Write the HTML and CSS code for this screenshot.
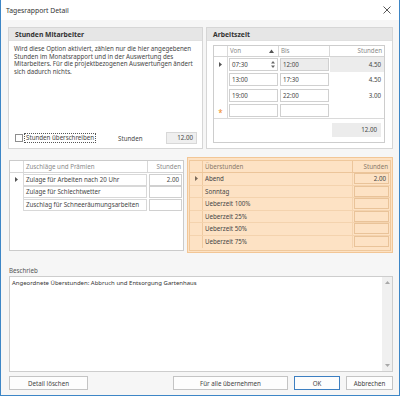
FILE: index.html
```html
<!DOCTYPE html>
<html lang="de">
<head>
<meta charset="utf-8">
<title>Tagesrapport Detail</title>
<link rel="stylesheet" href="styles.css">
</head>
<body>
<div class="window">
  <div class="titlebar">
    <span class="title">Tagesrapport Detail</span>
    <svg class="close" width="8" height="8" viewBox="0 0 8 8"><path d="M0.5 0.5L7.5 7.5M7.5 0.5L0.5 7.5" stroke="#444" stroke-width="0.9" fill="none"/></svg>
  </div>
  <div class="content">
    <div class="toprow">
      <section class="group gleft">
        <div class="ghead">Stunden Mitarbeiter</div>
        <div class="gbody">
          <p class="info">Wird diese Option aktiviert, zählen nur die hier angegebenen<br>Stunden im Monatsrapport und in der Auswertung des<br>Mitarbeiters. Für die projektbezogenen Auswertungen ändert<br>sich dadurch nichts.</p>
          <div class="override">
            <span class="check"></span>
            <span class="focuslabel">Stunden überschreiben</span>
            <span class="lbl">Stunden</span>
            <span class="field">12.00</span>
          </div>
        </div>
      </section>
      <section class="group gright">
        <div class="ghead">Arbeitszeit</div>
        <div class="gbody padded">
          <div class="tgrid">
            <div class="trow thead">
              <div class="ind"></div>
              <div class="hc">Von<svg class="sort" width="5" height="4" viewBox="0 0 5 4"><path d="M0 4L2.5 0.5L5 4Z" fill="#555"/></svg></div>
              <div class="hc">Bis</div>
              <div class="hc right">Stunden</div>
            </div>
            <div class="trow">
              <div class="ind"><svg class="arrow" width="3" height="5" viewBox="0 0 3 5"><path d="M0 0L3 2.5L0 5Z" fill="#555"/></svg></div>
              <div class="cell"><span class="box">07:30<svg class="spin" width="4" height="9" viewBox="0 0 4 9"><path d="M0 3.5L2 1L4 3.5Z M0 5.5L2 8L4 5.5Z" fill="#666"/></svg></span></div>
              <div class="cell"><span class="box ro">12:00</span></div>
              <div class="cell num sel">4.50</div>
            </div>
            <div class="trow">
              <div class="ind"></div>
              <div class="cell"><span class="box">13:00</span></div>
              <div class="cell"><span class="box">17:30</span></div>
              <div class="cell num">4.50</div>
            </div>
            <div class="trow">
              <div class="ind"></div>
              <div class="cell"><span class="box">19:00</span></div>
              <div class="cell"><span class="box">22:00</span></div>
              <div class="cell num">3.00</div>
            </div>
            <div class="trow last">
              <div class="ind"><span class="star">*</span></div>
              <div class="cell"><span class="box"></span></div>
              <div class="cell"><span class="box"></span></div>
              <div class="cell num"></div>
            </div>
            <div class="tfoot"><span class="sum">12.00</span></div>
          </div>
        </div>
      </section>
    </div>

    <div class="midrow">
      <div class="zgrid">
        <div class="zrow zhead">
          <div class="ind"></div>
          <div class="hc">Zuschläge und Prämien</div>
          <div class="hc right">Stunden</div>
        </div>
        <div class="zrow">
          <div class="ind"><svg class="arrow" width="3" height="5" viewBox="0 0 3 5"><path d="M0 0L3 2.5L0 5Z" fill="#555"/></svg></div>
          <div class="cell"><span class="dbox">Zulage für Arbeiten nach 20 Uhr</span></div>
          <div class="cell"><span class="vbox">2.00</span></div>
        </div>
        <div class="zrow">
          <div class="ind"></div>
          <div class="cell"><span class="dbox">Zulage für Schlechtwetter</span></div>
          <div class="cell"><span class="vbox"></span></div>
        </div>
        <div class="zrow">
          <div class="ind"></div>
          <div class="cell"><span class="dbox">Zuschlag für Schneeräumungsarbeiten</span></div>
          <div class="cell"><span class="vbox"></span></div>
        </div>
      </div>

      <div class="opanel">
        <div class="ogrid">
          <div class="orow ohead">
            <div class="ind"></div>
            <div class="hc">Überstunden</div>
            <div class="hc right">Stunden</div>
          </div>
          <div class="orow">
            <div class="ind"><svg class="arrow" width="3" height="5" viewBox="0 0 3 5"><path d="M0 0L3 2.5L0 5Z" fill="#7a6a5a"/></svg></div>
            <div class="cell olabel">Abend</div>
            <div class="cell"><span class="obox">2.00</span></div>
          </div>
          <div class="orow">
            <div class="ind"></div>
            <div class="cell olabel">Sonntag</div>
            <div class="cell"><span class="obox"></span></div>
          </div>
          <div class="orow">
            <div class="ind"></div>
            <div class="cell olabel">Ueberzeit 100%</div>
            <div class="cell"><span class="obox"></span></div>
          </div>
          <div class="orow">
            <div class="ind"></div>
            <div class="cell olabel">Ueberzeit 25%</div>
            <div class="cell"><span class="obox"></span></div>
          </div>
          <div class="orow">
            <div class="ind"></div>
            <div class="cell olabel">Ueberzeit 50%</div>
            <div class="cell"><span class="obox"></span></div>
          </div>
          <div class="orow">
            <div class="ind"></div>
            <div class="cell olabel">Ueberzeit 75%</div>
            <div class="cell"><span class="obox"></span></div>
          </div>
        </div>
      </div>
    </div>

    <div class="desclabel">Beschrieb</div>
    <div class="memo">
      <div class="memotext">Angeordnete Überstunden: Abbruch und Entsorgung Gartenhaus</div>
      <div class="scroll">
        <svg width="5" height="3" viewBox="0 0 5 3"><path d="M0 3L2.5 0L5 3Z" fill="#a8a8a8"/></svg>
        <svg width="5" height="3" viewBox="0 0 5 3"><path d="M0 0L2.5 3L5 0Z" fill="#a8a8a8"/></svg>
      </div>
    </div>

    <div class="buttons">
      <span class="btn b-del">Detail löschen</span>
      <span class="btn b-all">Für alle übernehmen</span>
      <span class="btn b-ok">OK</span>
      <span class="btn b-cancel">Abbrechen</span>
    </div>
  </div>
</div>
</body>
</html>
```

FILE: styles.css
```css
* { box-sizing: border-box; }
html, body { margin: 0; padding: 0; background: #ffffff; }
body {
  font-family: "Noto Sans", "Open Sans", sans-serif;
  font-size: 6.2px;
  color: #464646;
}
.window {
  width: 400px;
  height: 396px;
  border: 1px solid #3d86c6;
  border-top: none;
  background: #f6f6f6;
  display: flex;
  flex-direction: column;
}
.titlebar {
  height: 20px;
  flex: none;
  background: #ffffff;
  display: flex;
  align-items: center;
  justify-content: space-between;
  padding: 0 8px 0 5px;
}
.title { font-size: 6.8px; color: #333; }
.close { display: block; }

.content {
  flex: 1;
  display: flex;
  flex-direction: column;
  padding: 7px 6px 6px 7px;
}

/* ---------- top row ---------- */
.toprow {
  height: 122px;
  display: flex;
  gap: 3px;
}
.group {
  border: 1px solid #d6d6d6;
  background: #ffffff;
  display: flex;
  flex-direction: column;
}
.gleft { width: 195px; }
.gright { flex: 1; }
.ghead {
  height: 13px;
  flex: none;
  background: #e6e6e6;
  font-weight: bold;
  font-size: 6.8px;
  color: #333;
  line-height: 13px;
  padding-left: 6px;
  border-bottom: 1px solid #e0e0e0;
}
.gbody {
  flex: 1;
  display: flex;
  flex-direction: column;
}
.gbody.padded { padding: 4px 7px 5px 6px; }
.info {
  margin: 0;
  padding: 4px 5px 0 5px;
  line-height: 7.7px;
  white-space: nowrap;
}
.override {
  margin-top: auto;
  margin-bottom: 4px;
  display: flex;
  align-items: center;
  height: 12px;
  padding-left: 6px;
}
.check {
  width: 8px;
  height: 8px;
  border: 1px solid #8e8e8e;
  background: #fff;
  flex: none;
}
.focuslabel {
  margin-left: 1px;
  border: 1px dotted #555;
  padding: 0 1px;
  line-height: 8px;
}
.lbl { margin-left: 22px; }
.field {
  margin-left: auto;
  margin-right: 5px;
  width: 31px;
  height: 12px;
  border: 1px solid #d8d8d8;
  background: #efefef;
  text-align: right;
  padding-right: 3px;
  line-height: 10px;
}

/* ---------- time grid ---------- */
.tgrid {
  flex: 1;
  border: 1px solid #cdcdcd;
  display: flex;
  flex-direction: column;
}
.trow {
  display: grid;
  grid-template-columns: 14px 51px 51px 1fr;
  height: 15.3px;
}
.trow.thead {
  height: 11px;
  border-bottom: 1px solid #d4d4d4;
  color: #8a8a8a;
}
.trow.last { border-bottom: 1px solid #dadada; height: 16px; }
.ind {
  border-right: 1px solid #dadada;
  display: flex;
  align-items: center;
  justify-content: center;
}
.hc {
  border-right: 1px solid #d8d8d8;
  padding: 0 2px;
  line-height: 10px;
  display: flex;
  justify-content: space-between;
  align-items: center;
}
.hc:last-child { border-right: none; }
.hc.right { justify-content: flex-end; }
.sort { display: block; margin-right: 2px; }
.arrow { display: block; }
.star { color: #f08a24; font-size: 8px; line-height: 6px; margin-top: 6px; }
.cell {
  display: flex;
  align-items: center;
  padding: 0 1px;
}
.box {
  flex: 1;
  height: 13px;
  border: 1px solid #d0d0d0;
  background: #fff;
  display: flex;
  align-items: center;
  justify-content: space-between;
  padding: 0 2px 0 2px;
}
.box.ro { background: #ececec; }
.spin { display: block; }
.num { justify-content: flex-end; padding-right: 3px; }
.num.sel { background: #ececec; }
.tfoot {
  flex: 1;
  display: flex;
  justify-content: flex-end;
  align-items: center;
  padding-right: 3px;
}
.sum {
  width: 49px;
  height: 14px;
  background: #ececec;
  text-align: right;
  padding-right: 4px;
  line-height: 14px;
}

/* ---------- middle row ---------- */
.midrow {
  margin-top: 8px;
  height: 96px;
  display: flex;
  align-items: flex-start;
}
.zgrid {
  width: 175px;
  height: 91px;
  margin-top: 3px;
  margin-left: 1px;
  border: 1px solid #cbcbcb;
  background: #fff;
}
.zrow {
  display: grid;
  grid-template-columns: 14px 124px 1fr;
  height: 12.5px;
}
.zrow.zhead {
  height: 12px;
  border-bottom: 1px solid #d6d6d6;
  color: #8a8a8a;
}
.dbox {
  flex: 1;
  height: 12px;
  border: 1px solid #d8d8d8;
  border-left: none;
  padding-left: 2px;
  line-height: 10px;
  white-space: nowrap;
}
.vbox {
  flex: 1;
  height: 12px;
  border: 1px solid #d0d0d0;
  text-align: right;
  padding-right: 2px;
  line-height: 10px;
}
.zrow .cell { padding: 0.5px 1px 0 0; }
.zrow .cell:last-child { padding: 0.5px 1px 0 1px; }

.opanel {
  margin-left: auto;
  width: 206px;
  height: 96px;
  background: #fde2c4;
  border: 1px solid #f2c696;
  padding: 2px 1px 1px 1px;
}
.ogrid {
  border: 1px solid #efc89c;
  height: 91px;
}
.orow {
  display: grid;
  grid-template-columns: 13px 150px 1fr;
  height: 12.5px;
  border-bottom: 1px solid #f4d3ae;
}
.orow:last-child { border-bottom: none; }
.orow.ohead { height: 12px; border-bottom: 1px solid #ecc59a; color: #8a7a6a; }
.ogrid .ind { border-right: 1px solid #efcaa0; }
.ogrid .hc { border-right: 1px solid #ecc59a; }
.ogrid .hc:last-child { border-right: none; }
.olabel { padding-left: 2px; border-right: 1px solid #f4d3ae; }
.obox {
  flex: 1;
  height: 11px;
  border: 1px solid #e9c399;
  text-align: right;
  padding-right: 2px;
  line-height: 9px;
}

/* ---------- description ---------- */
.desclabel {
  margin-top: 13px;
  height: 10px;
  line-height: 10px;
  padding-left: 1px;
  color: #555;
}
.memo {
  height: 96px;
  margin-left: 1px;
  border: 1px solid #cdcdcd;
  background: #fff;
  display: flex;
}
.memotext {
  flex: 1;
  padding: 2px 2px;
  line-height: 9px;
  font-size: 6px;
  color: #333;
}
.scroll {
  width: 10px;
  background: #f0f0f0;
  display: flex;
  flex-direction: column;
  justify-content: space-between;
  align-items: center;
  padding: 4px 0;
}
.scroll svg { display: block; }

/* ---------- buttons ---------- */
.buttons {
  margin-top: 4px;
  height: 14px;
  display: flex;
  gap: 6px;
  padding-left: 1px;
}
.btn {
  height: 14px;
  border: 1px solid #c4c4c4;
  background: #fdfdfd;
  display: flex;
  align-items: center;
  justify-content: center;
  color: #444;
}
.b-del { width: 79px; }
.b-all { width: 115px; margin-left: auto; }
.b-ok { width: 46px; border-color: #3d7fc1; }
.b-cancel { width: 47px; }
```
